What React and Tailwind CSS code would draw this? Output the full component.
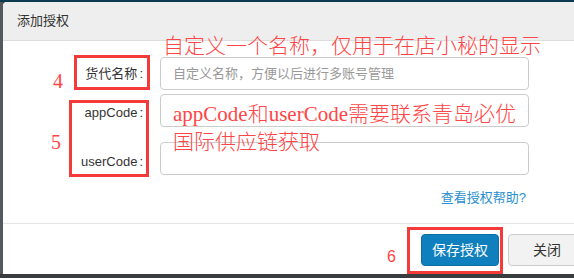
export default function App() {
  const redText = "text-[#ff4545] font-['Liberation_Serif','Noto_Sans_CJK_SC',serif] font-light";
  return (
    <div className="w-[574px] h-[278px] overflow-hidden bg-[#3a3d40] flex flex-col font-['Liberation_Sans','Noto_Sans_CJK_SC',sans-serif]">
      <div className="h-[2px] shrink-0 bg-[#0c3a4f]" />
      <div className="flex">
        <div className="w-[3px] h-[272px] shrink-0 bg-[#55595d]" />
        <div className="relative w-[600px] h-[272px] shrink-0 bg-white rounded-tl-[4px] flex flex-col">
          {/* header */}
          <div className="h-[39px] shrink-0 bg-[#eeeeee] border-b border-[#dddddd] rounded-tl-[4px] flex items-center px-[14px] text-[13px] text-[#333333]">
            添加授权
          </div>

          {/* body */}
          <div className="pt-[16px] pb-[15px] text-[13px] text-[#333333]">
            <div className="flex items-center">
              <div className="w-[140px] text-right">货代名称<span className="ml-[2px]">:</span></div>
              <div className="ml-[17px] w-[369px] h-[33px] border border-[#cccccc] rounded-[4px] flex items-center px-[12px] text-[#999999]">
                自定义名称，方便以后进行多账号管理
              </div>
            </div>
            <div className="flex items-start mt-[4px]">
              <div className="w-[140px] text-right pt-[9px] leading-5">appCode<span className="ml-[2px]">:</span></div>
              <div className="ml-[17px] w-[369px] h-[33px] border border-[#cccccc] rounded-[4px]" />
            </div>
            <div className="flex items-start mt-[15px]">
              <div className="w-[140px] text-right pt-[10px] leading-5">userCode<span className="ml-[2px]">:</span></div>
              <div className="ml-[17px] w-[369px] h-[33px] border border-[#cccccc] rounded-[4px]" />
            </div>
            <div className="w-[526px] mt-[13px] pr-[3px] text-right text-[13px] leading-5 text-[#2a8fd0]">
              查看授权帮助?
            </div>
          </div>

          {/* footer */}
          <div className="flex-1 border-t border-[#e5e5e5] flex justify-end items-start gap-[9px] pt-[10px] pr-[17px]">
            <button className="w-[78px] h-[32px] rounded-[4px] bg-[#0f7fbd] border border-[#0b6ea6] text-white text-[14px]">
              保存授权
            </button>
            <button className="w-[78px] h-[32px] rounded-[4px] bg-[#f2f2f2] border border-[#cccccc] text-[#333333] text-[14px]">
              关闭
            </button>
          </div>

          {/* annotations */}
          <div className={`absolute left-[160px] top-[34px] text-[21px] leading-[21px] whitespace-nowrap ${redText}`}>
            自定义一个名称，仅用于在店小秘的显示
          </div>
          <div className={`absolute left-[170px] top-[98px] text-[21px] leading-[28px] whitespace-nowrap ${redText}`}>
            <div>appCode和userCode需要联系青岛必优</div>
            <div>国际供应链获取</div>
          </div>

          <div className="absolute left-[71px] top-[53px] w-[76px] h-[35px] border-[3px] border-[#f53a3a]" />
          <div className="absolute left-[66px] top-[98px] w-[80px] h-[77px] border-[3px] border-[#f53a3a]" />
          <div className="absolute left-[404px] top-[225px] w-[96px] h-[47px] border-[3px] border-[#f53a3a]" />

          <div className="absolute left-[50px] top-[69px] text-[20px] leading-none text-[#ff4545] font-['Liberation_Serif',serif]">4</div>
          <div className="absolute left-[48px] top-[130px] text-[20px] leading-none text-[#ff4545] font-['Liberation_Serif',serif]">5</div>
          <div className="absolute left-[384px] top-[247px] text-[16px] leading-none text-[#ff4545] font-['Liberation_Sans',sans-serif]">6</div>
        </div>
      </div>
    </div>
  );
}
